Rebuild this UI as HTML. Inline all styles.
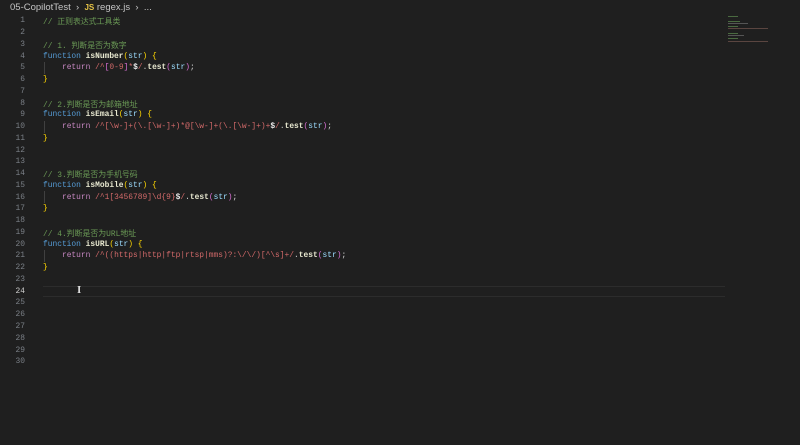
<!DOCTYPE html>
<html><head><meta charset="utf-8"><style>
html,body{margin:0;padding:0;background:#1f1f1f;width:800px;height:445px;overflow:hidden}
body{font-family:"Liberation Mono","Noto Sans CJK SC",monospace;font-size:7.9px;color:#d4d4d4;position:relative}
.bc{position:absolute;top:2px;left:10px;font-family:"Liberation Sans",sans-serif;font-size:9.5px;color:#c4c4c4;line-height:12px}
.bc .js{color:#e8c547;font-weight:bold;font-size:8px}
.ln{position:absolute;left:0;width:25px;text-align:right;color:#7a7f86}
.cd{position:absolute;left:43px;white-space:pre}
.c{color:#6a9955}.k{color:#569cd6}.f{color:#e8e8d0;font-weight:bold}.b{color:#ffd700}.p{color:#9cdcfe}
.r{color:#c586c0}.x{color:#d16969}.w{color:#e8e8e8;font-weight:bold}.pb{color:#da70d6}
.cur{position:absolute;left:43px;top:286px;width:682px;height:9px;border-top:1px solid #2c2c2c;border-bottom:1px solid #2c2c2c}
.guide{position:absolute;left:44px;width:1px;background:#404040}
.mm{position:absolute;height:1px}
</style></head><body>
<div class="bc">05-CopilotTest &nbsp;›&nbsp; <span class="js">JS</span> regex.js &nbsp;›&nbsp; ...</div>
<div class="cur"></div>
<div class="guide" style="top:62px;height:12px"></div>
<div class="guide" style="top:121px;height:12px"></div>
<div class="guide" style="top:191px;height:12px"></div>
<div class="guide" style="top:250px;height:12px"></div>
<div id="lines"></div>
<div style="position:absolute;left:77px;top:284px;color:#ddd;font-size:11px;font-family:'Liberation Serif',serif;font-weight:bold">I</div>
<div class="mm" style="left:728px;top:16px;width:10px;background:#4a6a40"></div>
<div class="mm" style="left:728px;top:21px;width:12px;background:#4a6a40"></div>
<div class="mm" style="left:728px;top:23px;width:20px;background:#555"></div>
<div class="mm" style="left:728px;top:26px;width:10px;background:#4a6a40"></div>
<div class="mm" style="left:728px;top:28px;width:40px;background:#5a4540"></div>
<div class="mm" style="left:728px;top:33px;width:10px;background:#4a6a40"></div>
<div class="mm" style="left:728px;top:35px;width:16px;background:#555"></div>
<div class="mm" style="left:728px;top:38px;width:10px;background:#4a6a40"></div>
<div class="mm" style="left:728px;top:41px;width:40px;background:#5a4540"></div>
<script>
var L=[
'<span class="c">// 正则表达式工具类</span>','',
'<span class="c">// 1. 判断是否为数字</span>',
'<span class="k">function</span> <span class="f">isNumber</span><span class="b">(</span><span class="p">str</span><span class="b">)</span> <span class="b">{</span>',
'    <span class="r">return</span> <span class="x">/^</span><span class="pb">[</span><span class="x">0-9</span><span class="pb">]</span><span class="x">*</span><span class="w">$</span><span class="x">/</span>.<span class="f">test</span><span class="pb">(</span><span class="p">str</span><span class="pb">)</span>;',
'<span class="b">}</span>','',
'<span class="c">// 2.判断是否为邮箱地址</span>',
'<span class="k">function</span> <span class="f">isEmail</span><span class="b">(</span><span class="p">str</span><span class="b">)</span> <span class="b">{</span>',
'    <span class="r">return</span> <span class="x">/^[\\w-]+(\\.[\\w-]+)*@[\\w-]+(\\.[\\w-]+)+</span><span class="w">$</span><span class="x">/</span>.<span class="f">test</span><span class="pb">(</span><span class="p">str</span><span class="pb">)</span>;',
'<span class="b">}</span>','','',
'<span class="c">// 3.判断是否为手机号码</span>',
'<span class="k">function</span> <span class="f">isMobile</span><span class="b">(</span><span class="p">str</span><span class="b">)</span> <span class="b">{</span>',
'    <span class="r">return</span> <span class="x">/^1[3456789]\\d{9}</span><span class="w">$</span><span class="x">/</span>.<span class="f">test</span><span class="pb">(</span><span class="p">str</span><span class="pb">)</span>;',
'<span class="b">}</span>','',
'<span class="c">// 4.判断是否为URL地址</span>',
'<span class="k">function</span> <span class="f">isURL</span><span class="b">(</span><span class="p">str</span><span class="b">)</span> <span class="b">{</span>',
'    <span class="r">return</span> <span class="x">/^((https|http|ftp|rtsp|mms)?:\\/\\/)[^\\s]+/</span>.<span class="f">test</span><span class="pb">(</span><span class="p">str</span><span class="pb">)</span>;',
'<span class="b">}</span>','','','','','','','',''];
var h='';
for(var i=0;i<30;i++){var t=(16.2+i*11.76).toFixed(1);
h+='<div class="ln" style="top:'+t+'px;'+(i==23?'color:#ccc':'')+'">'+(i+1)+'</div>';
h+='<div class="cd" style="top:'+t+'px">'+L[i]+'</div>';}
document.getElementById('lines').innerHTML=h;
</script>
</body></html>
